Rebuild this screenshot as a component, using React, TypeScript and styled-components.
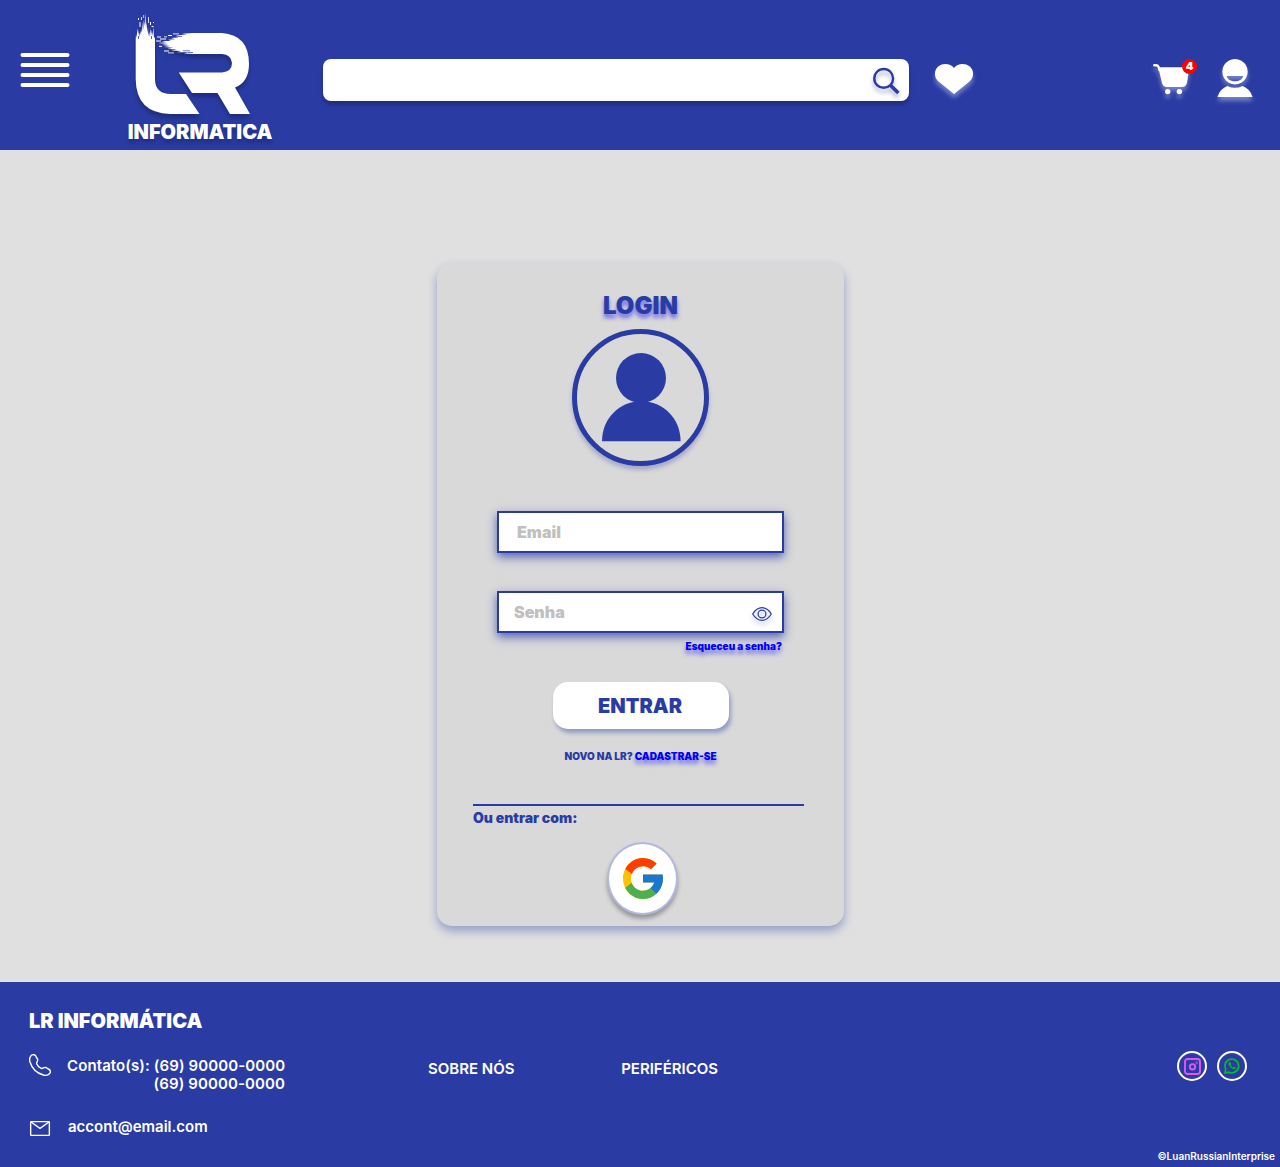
import React from "react";
import styled, { createGlobalStyle } from "styled-components";

const BLUE = "#2a3ca4";

const GlobalStyle = createGlobalStyle`
  * { box-sizing: border-box; }
  body { margin: 0; font-family: Inter, "Liberation Sans", sans-serif; font-optical-sizing: none; }
  button, input, a { font: inherit; font-optical-sizing: none; }
  svg { display: block; overflow: visible; }
`;

const Page = styled.div`
  width: 1280px;
  height: 1167px;
  display: flex;
  flex-direction: column;
  background: #e0e0e0;
`;

const Header = styled.header`
  height: 150px;
  flex: none;
  display: flex;
  align-items: flex-start;
  background: ${BLUE};
  color: #fff;
`;

const MenuButton = styled.button`
  width: 50px;
  margin: 53px 0 0 20px;
  padding: 0;
  border: 0;
  background: none;
`;

const Brand = styled.div`
  width: 150px;
  margin: 12px 0 0 55px;
  display: flex;
  flex-direction: column;
  align-items: center;
`;

const LogoDrawing = styled.svg`
  width: 120px;
  height: 104px;
  margin-right: 12px;
  filter: drop-shadow(0 4px 2px rgba(0, 0, 0, 0.25));
`;

const BrandName = styled.span`
  margin-top: 4px;
  font-size: 20px;
  line-height: 24px;
  font-weight: 900;
  white-space: nowrap;
  text-shadow: 0 4px 4px rgba(0, 0, 0, 0.25);
`;

const SearchBox = styled.label`
  width: 586px;
  height: 42px;
  margin: 59px 0 0 48px;
  padding-right: 9px;
  display: flex;
  align-items: center;
  background: #fff;
  border-radius: 8px;
  box-shadow: 0 4px 4px rgba(0, 0, 0, 0.25);
`;

const SearchInput = styled.input`
  flex: 1;
  border: 0;
  outline: 0;
  background: none;
  padding: 0 16px;
`;

const Icon = styled.svg<{ $w: number; $h: number; $glow?: string }>`
  width: ${(p) => p.$w}px;
  height: ${(p) => p.$h}px;
  flex: none;
  filter: ${(p) => (p.$glow ? `drop-shadow(0 4px 2px ${p.$glow})` : "none")};
`;

const Slot = styled.div<{ $top: number; $left: number }>`
  margin: ${(p) => p.$top}px 0 0 ${(p) => p.$left}px;
  position: relative;
`;

const Badge = styled.span`
  position: absolute;
  top: -5px;
  left: 29px;
  width: 15px;
  height: 15px;
  border-radius: 50%;
  background: #f00;
  font-size: 11px;
  line-height: 15px;
  font-weight: 900;
  text-align: center;
`;

const Main = styled.main`
  flex: 1;
  padding: 113px 0 0 437px;
`;

const Card = styled.form`
  width: 407px;
  height: 663px;
  padding: 28px 0 0;
  display: flex;
  flex-direction: column;
  align-items: center;
  color: ${BLUE};
  background: #d9d9d9;
  border-radius: 15px;
  box-shadow: 0 5px 10px rgba(42, 60, 164, 0.4);
`;

const Title = styled.h1`
  margin: 0;
  height: 30px;
  font-size: 24px;
  line-height: 29px;
  font-weight: 900;
  text-shadow: 0 4px 4px rgba(0, 0, 255, 0.5);
`;

const AvatarRing = styled.div`
  width: 137px;
  height: 137px;
  margin-top: 8px;
  padding: 19px 0 0 25px;
  border: 5px solid ${BLUE};
  border-radius: 50%;
  background: #d9d9d9;
  box-shadow: 0 4px 4px rgba(42, 60, 164, 0.3);
`;

const Field = styled.label<{ $top: number; $pad: number }>`
  width: 287px;
  height: 42px;
  margin-top: ${(p) => p.$top}px;
  padding: 0 10px 0 ${(p) => p.$pad}px;
  display: flex;
  align-items: center;
  background: #fff;
  border: 2px solid ${BLUE};
  box-shadow: 0 4px 9px rgba(42, 60, 164, 0.75);
`;

const FieldInput = styled.input`
  flex: 1;
  min-width: 0;
  height: 38px;
  padding: 0;
  border: 0;
  outline: 0;
  background: none;
  font-size: 16px;
  font-weight: 900;
  &::placeholder { color: #c0c0c0; opacity: 1; }
`;

const TextLink = styled.a`
  color: #00f;
  text-shadow: 0 4px 4px rgba(0, 0, 255, 0.5);
`;

const Forgot = styled.div`
  width: 283px;
  margin-top: 7px;
  text-align: right;
  font-size: 10px;
  line-height: 13px;
  font-weight: 900;
`;

const Submit = styled.button`
  width: 176px;
  height: 47px;
  margin: 29px 0 0 1px;
  padding: 0 2px 0 0;
  border: 0;
  border-radius: 15px;
  background: #fff;
  color: ${BLUE};
  font-size: 20px;
  font-weight: 900;
  box-shadow: 2px 4px 4px rgba(42, 60, 164, 0.4);
`;

const SignUp = styled.div`
  margin-top: 21px;
  font-size: 10px;
  line-height: 13px;
  font-weight: 900;
`;

const Alternative = styled.div`
  width: 331px;
  height: 27px;
  margin: 41px 4px 0 0;
  padding-top: 3px;
  border-top: 2px solid ${BLUE};
  font-size: 14px;
  line-height: 18px;
  font-weight: 900;
`;

const GoogleButton = styled.button`
  width: 71px;
  height: 73px;
  margin: 11px 0 0 4px;
  padding: 0 0 0 1px;
  display: flex;
  align-items: center;
  justify-content: center;
  border: 2px solid #b2b9e0;
  border-radius: 50%;
  background: #fff;
  box-shadow: 0 4px 4px rgba(0, 0, 0, 0.3);
`;

const Footer = styled.footer`
  height: 185px;
  flex: none;
  display: flex;
  background: ${BLUE};
  color: #fff;
  font-size: 15px;
  line-height: 18px;
  font-weight: 600;
`;

const Contact = styled.section`
  width: 428px;
  padding: 27px 0 0 29px;
`;

const FooterTitle = styled.h2`
  margin: 0;
  font-size: 20px;
  line-height: 24px;
  font-weight: 900;
`;

const ContactRow = styled.div<{ $top: number; $gap: number }>`
  margin-top: ${(p) => p.$top}px;
  display: flex;
  gap: ${(p) => p.$gap}px;
`;

const Phones = styled.div`
  width: 218px;
  margin-top: 3px;
  text-align: right;
  white-space: nowrap;
  letter-spacing: 0.1px;
`;

const FooterNav = styled.nav`
  width: 290px;
  padding-top: 78px;
  display: flex;
  justify-content: space-between;
`;

const FooterEnd = styled.section`
  flex: 1;
  padding: 69px 5px 0 0;
  display: flex;
  flex-direction: column;
  align-items: flex-end;
`;

const SocialRow = styled.div`
  display: flex;
  gap: 10px;
  padding-right: 28px;
`;

const Social = styled.a`
  width: 30px;
  height: 30px;
  display: flex;
  align-items: center;
  justify-content: center;
  border: 2px solid #fff;
  border-radius: 50%;
`;

const Copyright = styled.small`
  margin-top: 69px;
  font-size: 10px;
  line-height: 13px;
`;

function Logo() {
  return (
    <LogoDrawing viewBox="134 12 120 104" fill="#fff">
      <path d="M135.7 40 L136 34 136.8 38 137.3 28 138.2 35 138.8 30 139.4 37 140.2 31 140.8 35 141.4 29 142 33 142.5 22 143.2 30 143.8 20 144.5 26 145.4 13 145.9 27 146.6 22 147.2 33 148 27 148.4 36 149.2 32 150 37 150.6 28 151.3 35 151.8 30 152.5 36 153.4 27 153.9 37 155 38 V79 Q155 94 171 94 H186 L199.5 114 H170 Q136 113 135.7 79 Z" />
      <path d="M181 35 L187 34.3 182 33.8 193 33 H222 Q249 35 249 64 Q249 82 235 87.5 L250 114 H230 L217.5 93 H192 L178.8 72.5 H222 Q232 71.5 232 63 Q231 54.5 222 54 H193 L184 53.4 189 52.3 177 52.3 181 51 171 50.6 177 49.5 167 49 173 47.8 164 47 170 46 162 45 168 44 158 43 166 42.3 162 41 171 41 168 39.7 175 39.3 171 38 178 37.5 176 35.8 Z" />
      <g>
        <rect x="138" y="18" width="1" height="2" />
        <rect x="139.5" y="22" width="1" height="5" />
        <rect x="141" y="17" width=".8" height="3" />
        <rect x="143.4" y="15" width=".7" height="3" />
        <rect x="148" y="17" width=".8" height="6" />
        <rect x="150" y="22" width="1" height="3" />
        <rect x="153" y="22" width="1" height="1" />
        <rect x="151.5" y="26" width="2" height="1" />
        <rect x="157" y="36.5" width="4" height="1" />
        <rect x="160" y="38.5" width="6" height="1" />
        <rect x="156" y="40.5" width="5" height="1" />
        <rect x="164" y="36.5" width="3" height=".8" />
        <rect x="168" y="35" width="4" height="1" />
        <rect x="173" y="33.5" width="6" height=".8" />
        <rect x="159" y="45.8" width="3" height="1" />
        <rect x="164" y="50.5" width="5" height="1" />
        <rect x="168" y="52.5" width="6" height=".8" />
      </g>
      <g fill={BLUE}>
        <rect x="138" y="36" width=".8" height="3" />
        <rect x="151" y="36" width=".8" height="3" />
        <rect x="177" y="36" width="5" height=".7" />
        <rect x="183" y="50.5" width="7" height=".7" />
        <rect x="188" y="52" width="5" height=".7" />
      </g>
    </LogoDrawing>
  );
}

export default function App() {
  return (
    <Page>
      <GlobalStyle />
      <Header>
        <MenuButton aria-label="Menu">
          <Icon $w={50} $h={34} viewBox="0 0 50 34" stroke="#fff" strokeWidth="4" strokeLinecap="round">
            <path d="M2.5 2H47.5M2.5 12H47.5M2.5 22H47.5M2.5 32H47.5" />
          </Icon>
        </MenuButton>
        <Brand>
          <Logo />
          <BrandName>INFORMATICA</BrandName>
        </Brand>
        <SearchBox>
          <SearchInput aria-label="Buscar" />
          <Icon $w={27} $h={27} $glow="rgba(42,60,164,.4)" viewBox="0 -.7 27 27" fill="none" stroke={BLUE}>
            <circle cx="10.7" cy="10.7" r="9.4" strokeWidth="2.4" />
            <path d="M17.2 17.2 25.4 25.4" strokeWidth="3.6" />
          </Icon>
        </SearchBox>
        <Slot $top={64} $left={26}>
          <Icon $w={38} $h={30} $glow="rgba(255,255,255,.35)" viewBox="0 0 38 30" fill="#fff">
            <path d="M19 30 L3.2 17.2 C-1.5 13 -.8 5.8 3.2 2.5 C7.8-1.2 15.5-.8 19 4 C22.5-.8 30.2-1.2 34.8 2.5 C38.8 5.8 39.5 13 34.8 17.2 Z" />
          </Icon>
        </Slot>
        <Slot $top={64} $left={180}>
          <Icon $w={37} $h={31} $glow="rgba(255,255,255,.35)" viewBox="0 0 37 31" fill="#fff">
            <path d="M1.3 1.3H3.5Q5 1.3 5.5 3L6.5 6" fill="none" stroke="#fff" strokeWidth="2.4" strokeLinecap="round" />
            <path d="M5.3 3.2H36.5L34 18.5Q33 23 29 23H14Q10 23 8.8 18.5Z" />
            <circle cx="14.7" cy="27.6" r="2.7" />
            <circle cx="26.4" cy="27.6" r="2.7" />
          </Icon>
          <Badge>4</Badge>
        </Slot>
        <Slot $top={59} $left={27}>
          <Icon $w={35} $h={38} $glow="rgba(255,255,255,.35)" viewBox="-.5 0 35 38" fill="#fff">
            <path fillRule="evenodd" d="M17.5 0a12.7 12.7 0 1 0 .01 0ZM9.2 17H25.8C24.5 24 10.5 24 9.2 17Z" />
            <path d="M0 38Q2.5 29.5 10 27Q17.5 30.7 25 27Q32.5 29.5 35 38Z" />
          </Icon>
        </Slot>
      </Header>

      <Main>
        <Card>
          <Title>LOGIN</Title>
          <AvatarRing>
            <Icon $w={79} $h={89} viewBox="0 0 79 89" fill={BLUE}>
              <circle cx="39" cy="25" r="25" />
              <path d="M0 88.3C0 66 17 48.3 39.3 48.3S78.6 66 78.6 88.3Z" />
            </Icon>
          </AvatarRing>
          <Field $top={45} $pad={18}>
            <FieldInput type="email" placeholder="Email" aria-label="Email" />
          </Field>
          <Field $top={38} $pad={15}>
            <FieldInput type="password" placeholder="Senha" aria-label="Senha" />
            <Slot $top={3} $left={0}>
              <Icon $w={20} $h={14} $glow="rgba(42,60,164,.3)" viewBox="0 0 20 14" fill="none" stroke={BLUE} strokeWidth="1.2">
                <path d="M.7 7Q4.5.7 10 .7T19.3 7Q15.5 13.3 10 13.3T.7 7Z" />
                <circle cx="10" cy="7" r="3.9" />
              </Icon>
            </Slot>
          </Field>
          <Forgot><TextLink>Esqueceu a senha?</TextLink></Forgot>
          <Submit type="button">ENTRAR</Submit>
          <SignUp>NOVO NA LR? <TextLink>CADASTRAR-SE</TextLink></SignUp>
          <Alternative>Ou entrar com:</Alternative>
          <GoogleButton type="button" aria-label="Google">
            <Icon $w={40} $h={41} viewBox="4 4 40 40" preserveAspectRatio="none">
              <path fill="#FFC107" d="M43.611 20.083H42V20H24v8h11.303C33.654 32.657 29.223 36 24 36c-6.627 0-12-5.373-12-12s5.373-12 12-12c3.059 0 5.842 1.154 7.961 3.039l5.657-5.657C34.046 6.053 29.268 4 24 4 12.955 4 4 12.955 4 24s8.955 20 20 20 20-8.955 20-20c0-1.341-.138-2.65-.389-3.917z" />
              <path fill="#FF3D00" d="m6.306 14.691 6.571 4.819C14.655 15.108 18.961 12 24 12c3.059 0 5.842 1.154 7.961 3.039l5.657-5.657C34.046 6.053 29.268 4 24 4 16.318 4 9.656 8.337 6.306 14.691z" />
              <path fill="#4CAF50" d="M24 44c5.166 0 9.86-1.977 13.409-5.192l-6.19-5.238C29.211 35.091 26.715 36 24 36c-5.202 0-9.619-3.317-11.283-7.946l-6.522 5.025C9.505 39.556 16.227 44 24 44z" />
              <path fill="#1976D2" d="M43.611 20.083H42V20H24v8h11.303a12.04 12.04 0 0 1-4.087 5.571l6.19 5.238C36.971 39.205 44 34 44 24c0-1.341-.138-2.65-.389-3.917z" />
            </Icon>
          </GoogleButton>
        </Card>
      </Main>

      <Footer>
        <Contact>
          <FooterTitle>LR INFORMÁTICA</FooterTitle>
          <ContactRow $top={21} $gap={16}>
            <Icon $w={22} $h={22} viewBox="0 0 22 22" fill="none" stroke="#fff" strokeWidth="1.4">
              <path d="M2.3 1.4C4-.1 6.3.7 7.1 2.6L8.6 5.4C9.3 7 7.2 8 7.7 9.7C8.5 11.9 10.2 13.6 12.3 14.4C14 15 15 12.8 16.7 13.5L19.5 15C21.4 15.9 22 18 20.7 19.5C19.1 21.4 16.8 21.7 14.3 21C7.8 19 2.8 14.1.9 7.7C.3 5.2.5 3.1 2.3 1.4Z" />
            </Icon>
            <Phones>Contato(s): (69) 90000-0000<br />(69) 90000-0000</Phones>
          </ContactRow>
          <ContactRow $top={25} $gap={18}>
            <Slot $top={3} $left={1}>
              <Icon $w={20} $h={15} viewBox="0 0 20 15" fill="none" stroke="#fff" strokeWidth="1.4">
                <rect x=".65" y=".65" width="18.7" height="13.7" rx=".5" />
                <path d="M1 1 10 7.3 19 1" />
              </Icon>
            </Slot>
            accont@email.com
          </ContactRow>
        </Contact>
        <FooterNav><span>SOBRE NÓS</span><span>PERIFÉRICOS</span></FooterNav>
        <FooterEnd>
          <SocialRow>
            <Social aria-label="Instagram">
              <Icon $w={17} $h={17} viewBox="0 0 17 17" fill="none" stroke="#e255f2">
                <rect x="1" y="1" width="15" height="15" rx="2.5" strokeWidth="1.9" />
                <circle cx="8.5" cy="8.8" r="2.7" strokeWidth="1.9" />
                <circle cx="12.7" cy="4.7" r="1" strokeWidth=".7" />
              </Icon>
            </Social>
            <Social aria-label="WhatsApp">
              <Icon $w={16} $h={16} viewBox="0 0 16 16" fill="none" stroke="#00c41c">
                <path d="M1 15 1.7 11.4A6.9 6.9 0 1 1 4.7 14.2Z" strokeWidth="1.6" />
                <path d="M5.2 4.3C4.3 5 4.4 6.4 5.2 7.6C6.2 9.4 7.7 10.7 9.6 11.2C10.7 11.5 11.8 10.7 11.8 9.8L9.8 8.8 9 9.7Q7.2 8.9 6.4 7.1L7.1 6.3 6.3 4.3Z" fill="#00c41c" stroke="none" />
              </Icon>
            </Social>
          </SocialRow>
          <Copyright>©LuanRussianInterprise</Copyright>
        </FooterEnd>
      </Footer>
    </Page>
  );
}
